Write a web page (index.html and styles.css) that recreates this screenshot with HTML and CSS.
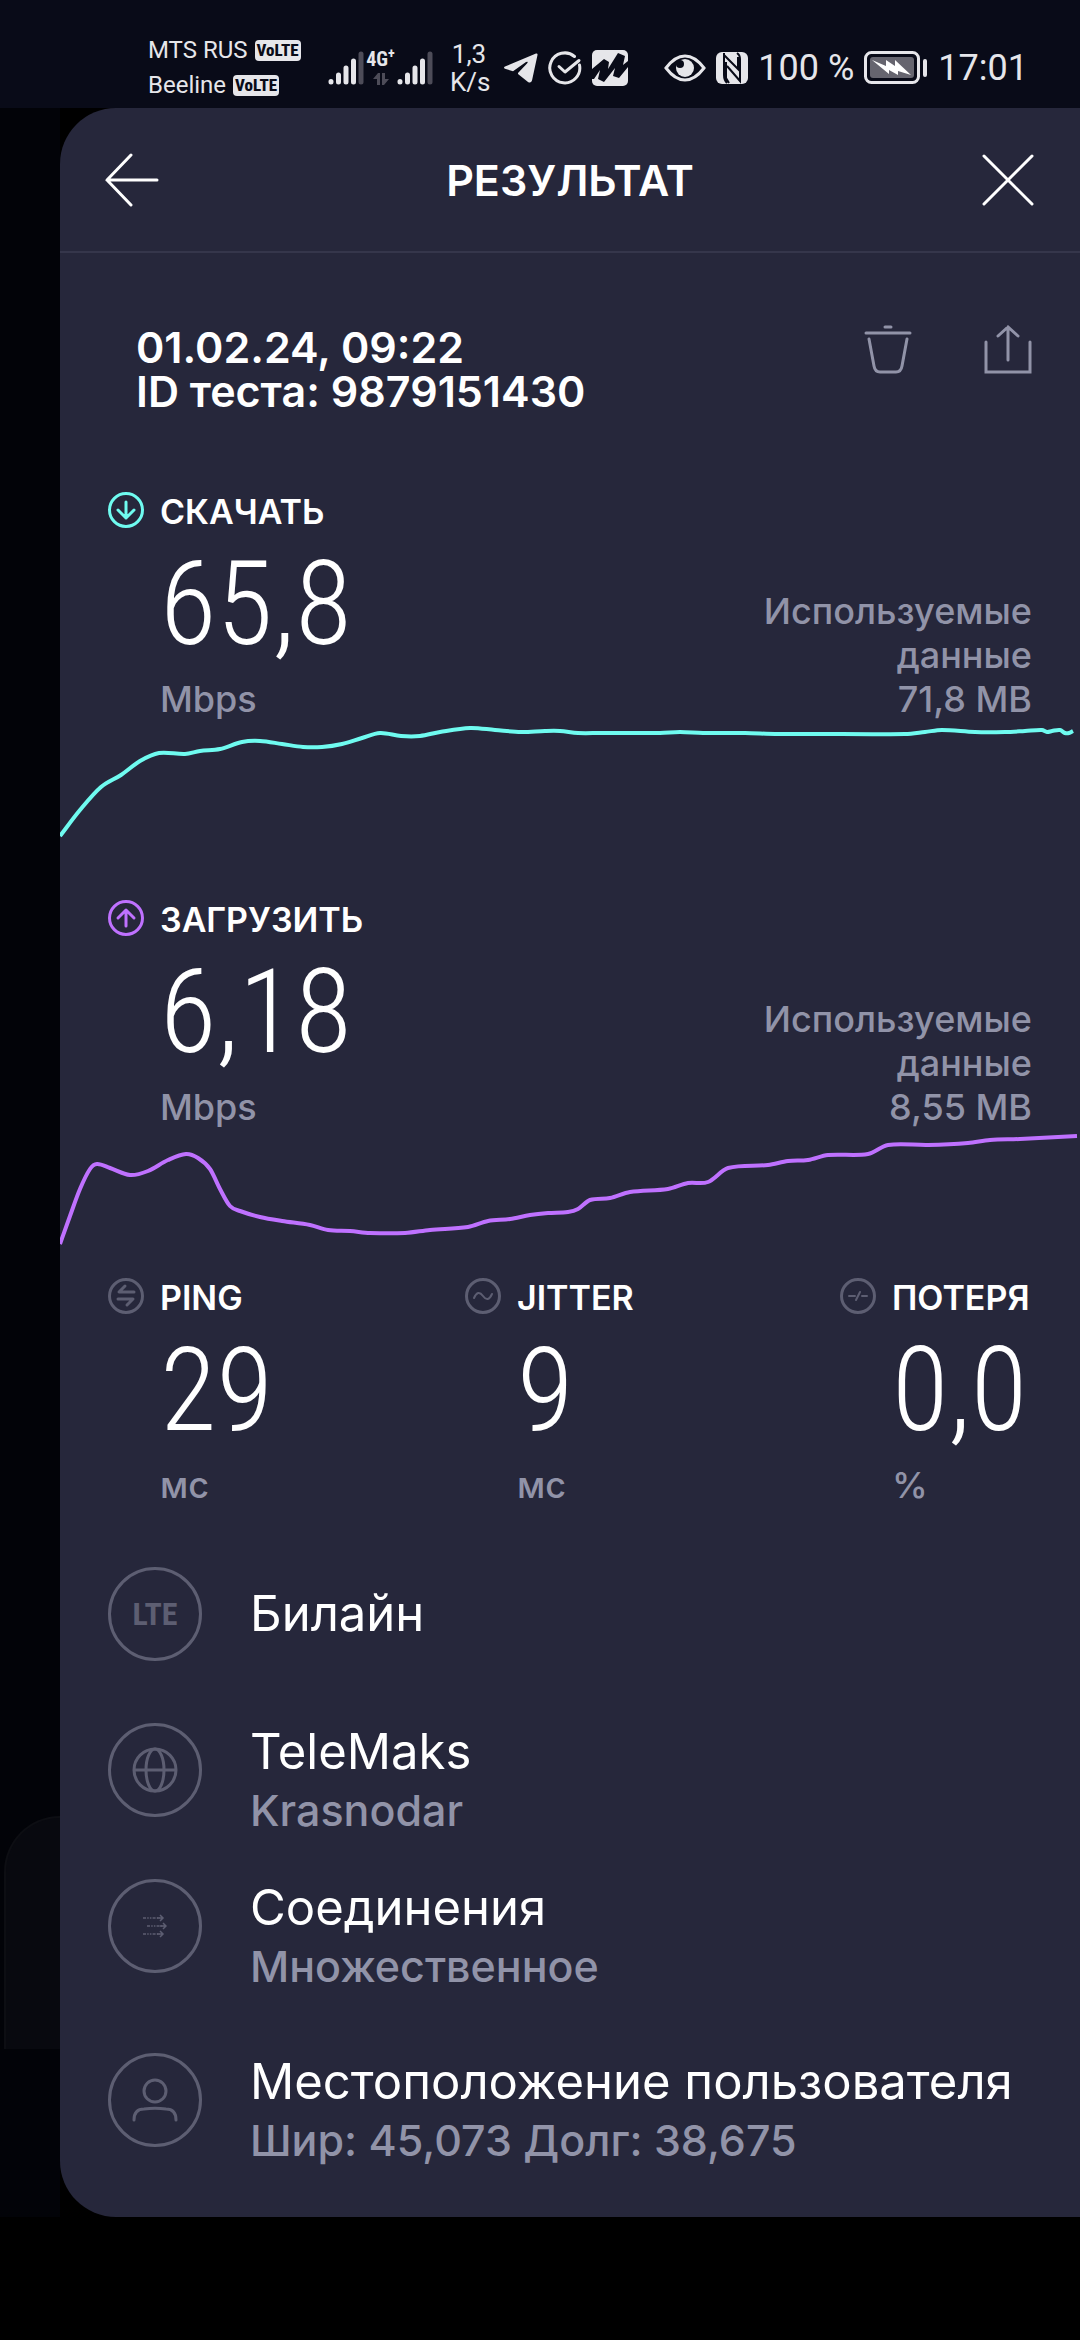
FILE: index.html
```html
<!DOCTYPE html>
<html lang="ru">
<head>
    <meta charset="UTF-8">
    <meta name="viewport" content="width=device-width, initial-scale=1.0">
    <title>Результат</title>
    <link rel="stylesheet" href="styles.css">
</head>
<body>
    <div class="statusbar">
        <div class="carriers">
            <div class="carrier">MTS RUS <span class="volte">VoLTE</span></div>
            <div class="carrier">Beeline <span class="volte">VoLTE</span></div>
        </div>
        <div class="signals">
            <svg width="36" height="34" viewBox="0 0 36 34" fill="none" stroke="#e6e6ea" stroke-width="5" stroke-linecap="round">
                <path d="M3 30.500v.5M10.500 24v7M18 17v14M25.500 10v21"/>
                <path d="M33 3v28" stroke="#4d4c58"/>
            </svg>
            <div class="network">
                <span class="network-type">4G<sup>+</sup></span>
                <svg width="16" height="12" viewBox="0 0 16 12" fill="#4d4c58">
                    <path d="M5 0h2v12H4V6H0zM9 0h3v6h4l-5 6H9z"/>
                </svg>
            </div>
            <svg width="36" height="34" viewBox="0 0 36 34" fill="none" stroke="#e6e6ea" stroke-width="5" stroke-linecap="round">
                <path d="M3 30.500v.5M10.500 24v7M18 17v14M25.500 10v21"/>
                <path d="M33 3v28" stroke="#4d4c58"/>
            </svg>
        </div>
        <div class="netspeed">1,3<br>K/s</div>
        <div class="apps">
            <svg width="34" height="30" viewBox="0 0 34 30" fill="#e6e6ea">
                <path d="M32 .5 1 13.500q-2 1.200 0 2.200l8 2.600L22 9q3-1 1 1.500L14 20v1l10 8q3 1.500 4-1.500L33.500 2q.3-2-1.500-1.500z"/>
            </svg>
            <svg width="34" height="34" viewBox="0 0 34 34" fill="none" stroke="#e6e6ea" stroke-width="3" stroke-linecap="round" stroke-linejoin="round">
                <path d="M26.500 5.500A15 15 0 1 0 31.500 14"/>
                <path d="M11 15.500l6 5.500L31 9.500"/>
            </svg>
            <svg width="36" height="36" viewBox="0 0 36 36">
                <rect width="36" height="36" rx="5" fill="#e6e6ea"/>
                <path d="M0 19 12 9l5 3-1 7L26 3l7 3-2 9 5-4v6l-9 11-6-2 2-8-11 14-6-3 2-9-6 9H0z" fill="#090b18"/>
            </svg>
        </div>
        <div class="system">
            <svg width="42" height="28" viewBox="0 0 42 28" fill="none">
                <path d="M2 14Q11 2 21 2t19 12Q31 26 21 26T2 14z" stroke="#e6e6ea" stroke-width="3"/>
                <circle cx="21" cy="14" r="9" fill="#e6e6ea"/>
                <circle cx="16" cy="10" r="4" fill="#090b18"/>
            </svg>
            <svg width="32" height="32" viewBox="0 0 32 32">
                <rect width="32" height="32" rx="6" fill="#e6e6ea"/>
                <path d="M8 1v22q0 5 3 8M8 3l14 14V5M10 10v16l3 5M11 14l13 15V7q0-4-3-6" fill="none" stroke="#090b18" stroke-width="2"/>
            </svg>
            <span class="percent">100 %</span>
            <svg width="64" height="34" viewBox="0 0 64 34">
                <rect x="1.500" y="1.500" width="53" height="30" rx="6" fill="none" stroke="#e6e6ea" stroke-width="3"/>
                <rect x="6" y="6" width="44" height="21" rx="3" fill="#66656f"/>
                <path d="M8 9l14 6V9l9 6V9l16 15-13-4v4l-9-5v4z" fill="#fff"/>
                <path d="M61 10v14" stroke="#e6e6ea" stroke-width="4" stroke-linecap="round"/>
            </svg>
            <span class="clock">17:01</span>
        </div>
    </div>

    <div class="screen">
        <div class="backdrop">
            <div class="backdrop-card"></div>
        </div>

        <main class="panel">
            <header class="header">
                <button class="icon-button" aria-label="Назад">
                    <svg width="54" height="54" viewBox="0 0 54 54" fill="none" stroke="#fff" stroke-width="3" stroke-linecap="round">
                        <path d="M26 2 2 27l24 25M2 27h50"/>
                    </svg>
                </button>
                <h1 class="title">РЕЗУЛЬТАТ</h1>
                <button class="icon-button" aria-label="Закрыть">
                    <svg width="54" height="54" viewBox="0 0 54 54" fill="none" stroke="#fff" stroke-width="3" stroke-linecap="round">
                        <path d="M3 3l48 48M51 3 3 51"/>
                    </svg>
                </button>
            </header>

            <section class="meta">
                <div class="meta-text">
                    <div>01.02.24, 09:22</div>
                    <div>ID теста: 9879151430</div>
                </div>
                <div class="actions">
                    <button class="icon-button" aria-label="Удалить">
                        <svg width="48" height="50" viewBox="0 0 48 50" fill="none" stroke="#9193a8" stroke-width="3" stroke-linecap="round">
                            <path d="M2 8h44M21 2h6M5 14l5 27q1 6 6 6h16q5 0 6-6l5-27"/>
                        </svg>
                    </button>
                    <button class="icon-button" aria-label="Поделиться">
                        <svg width="48" height="50" viewBox="0 0 48 50" fill="none" stroke="#9193a8" stroke-width="3" stroke-linecap="round">
                            <path d="M2 17v30h44V17M24 35V2M14 11 24 2l10 9"/>
                        </svg>
                    </button>
                </div>
            </section>

            <section class="speed">
                <div class="speed-info">
                    <div class="metric">
                        <svg width="36" height="36" viewBox="0 0 36 36" fill="none" stroke="#6ffbf0" stroke-width="3" stroke-linecap="round" stroke-linejoin="round">
                            <circle cx="18" cy="18" r="16.500"/>
                            <path d="M18 10v16M10 18l8 8 8-8"/>
                        </svg>
                        <div>
                            <h2 class="label">СКАЧАТЬ</h2>
                            <div class="value">65,8</div>
                            <div class="unit">Mbps</div>
                        </div>
                    </div>
                    <div class="used">Используемые данные<br>71,8 MB</div>
                </div>
                <svg class="chart" viewBox="0 0 1020 120"><path id="downloadLine" stroke="#6ffbf0"/></svg>
            </section>

            <section class="speed">
                <div class="speed-info">
                    <div class="metric">
                        <svg width="36" height="36" viewBox="0 0 36 36" fill="none" stroke="#bf71ff" stroke-width="3" stroke-linecap="round" stroke-linejoin="round">
                            <circle cx="18" cy="18" r="16.500"/>
                            <path d="M18 26V10M10 18l8-8 8 8"/>
                        </svg>
                        <div>
                            <h2 class="label">ЗАГРУЗИТЬ</h2>
                            <div class="value">6,18</div>
                            <div class="unit">Mbps</div>
                        </div>
                    </div>
                    <div class="used">Используемые данные<br>8,55 MB</div>
                </div>
                <svg class="chart" viewBox="0 0 1020 120"><path id="uploadLine" stroke="#bf71ff"/></svg>
            </section>

            <section class="latency">
                <div class="metric">
                    <svg width="36" height="36" viewBox="0 0 36 36" fill="none" stroke="#5d5e72" stroke-width="3" stroke-linecap="round" stroke-linejoin="round">
                        <circle cx="18" cy="18" r="16.500"/>
                        <path d="M17 8l-6 6h15M10 21h15l-6 6"/>
                    </svg>
                    <div>
                        <h2 class="label">PING</h2>
                        <div class="value">29</div>
                        <div class="unit">мс</div>
                    </div>
                </div>
                <div class="metric">
                    <svg width="36" height="36" viewBox="0 0 36 36" fill="none" stroke="#5d5e72" stroke-width="3" stroke-linecap="round" stroke-linejoin="round">
                        <circle cx="18" cy="18" r="16.500"/>
                        <path d="M9 20q4-9 9-2t9-2" stroke-width="2"/>
                    </svg>
                    <div>
                        <h2 class="label">JITTER</h2>
                        <div class="value">9</div>
                        <div class="unit">мс</div>
                    </div>
                </div>
                <div class="metric">
                    <svg width="36" height="36" viewBox="0 0 36 36" fill="none" stroke="#5d5e72" stroke-width="3" stroke-linecap="round" stroke-linejoin="round">
                        <circle cx="18" cy="18" r="16.500"/>
                        <path d="M9 18h6M22 18h5M16 22l4-8" stroke-width="2"/>
                    </svg>
                    <div>
                        <h2 class="label">ПОТЕРЯ</h2>
                        <div class="value">0,0</div>
                        <div class="unit">%</div>
                    </div>
                </div>
            </section>

            <section class="details">
                <div class="item">
                    <div class="badge">LTE</div>
                    <div class="item-text">
                        <div class="item-title">Билайн</div>
                    </div>
                </div>
                <div class="item">
                    <div class="badge">
                        <svg width="46" height="46" viewBox="0 0 46 46" fill="none" stroke="#5d5e72" stroke-width="3">
                            <circle cx="23" cy="23" r="21"/>
                            <ellipse cx="23" cy="23" rx="9" ry="21"/>
                            <path d="M2 23h42"/>
                        </svg>
                    </div>
                    <div class="item-text">
                        <div class="item-title">TeleMaks</div>
                        <div class="item-sub">Krasnodar</div>
                    </div>
                </div>
                <div class="item item-tall">
                    <div class="badge">
                        <svg width="24" height="24" viewBox="0 0 24 24" fill="none" stroke="#5d5e72" stroke-width="1.500">
                            <path d="M0 4h17M4 12h17M0 20h17" stroke-dasharray="3 1.200 1.500 1.200 1.500 1.200"/>
                            <path d="M17 1l3 3-3 3M20 9l3 3-3 3M17 17l3 3-3 3M14 4h6M17 12h6M14 20h6"/>
                        </svg>
                    </div>
                    <div class="item-text">
                        <div class="item-title">Соединения</div>
                        <div class="item-sub">Множественное</div>
                    </div>
                </div>
                <div class="item">
                    <div class="badge">
                        <svg width="46" height="46" viewBox="0 0 46 46" fill="none" stroke="#5d5e72" stroke-width="3" stroke-linecap="round">
                            <circle cx="23" cy="14" r="11"/>
                            <path d="M2 43q0-11 10-11 11-1.500 22 0 10 0 10 11"/>
                        </svg>
                    </div>
                    <div class="item-text">
                        <div class="item-title">Местоположение пользователя</div>
                        <div class="item-sub">Шир: 45,073 Долг: 38,675</div>
                    </div>
                </div>
            </section>
        </main>
    </div>

    <script src="script.js"></script>
</body>
</html>
```

FILE: styles.css
```css
* {
    box-sizing: border-box;
}
body {
    margin: 0;
    min-height: 100vh;
    background: #000;
    color: #fff;
    font-family: Inter, "Noto Sans", sans-serif;
}
svg {
    display: block;
    flex-shrink: 0;
}

/* Status bar */
.statusbar {
    display: flex;
    align-items: center;
    height: 108px;
    padding: 28px 52px 0 148px;
    background: #090b18;
    color: #e6e6ea;
    font-family: Roboto, sans-serif;
    white-space: nowrap;
}
.carriers {
    width: 180px;
}
.carrier {
    display: flex;
    align-items: center;
    gap: 7px;
    font-size: 24px;
    line-height: 35px;
}
.volte {
    padding: 0 2px;
    border-radius: 4px;
    background: #e6e6ea;
    color: #090b18;
    font-family: "Roboto Condensed", Roboto, sans-serif;
    font-size: 17px;
    font-weight: 800;
    line-height: 21px;
}
.signals {
    display: flex;
    align-items: flex-end;
    width: 122px;
}
.network {
    display: flex;
    flex-direction: column;
    align-items: center;
    gap: 6px;
    width: 33px;
}
.network-type {
    font-family: "Roboto Condensed", Roboto, sans-serif;
    font-size: 20px;
    font-weight: 700;
    line-height: 16px;
}
.network-type sup {
    font-size: 14px;
    line-height: 0;
}
.netspeed {
    width: 38px;
    font-size: 26px;
    line-height: 28px;
    text-align: center;
}
.apps {
    display: flex;
    align-items: center;
    gap: 10px;
    margin-left: 16px;
}
.system {
    display: flex;
    align-items: center;
    gap: 10px;
    margin-left: auto;
}
.percent,
.clock {
    font-size: 36px;
    line-height: 40px;
}

/* Result panel over the dimmed screen */
.screen {
    display: grid;
    grid-template-columns: 60px 1fr;
}
.backdrop {
    display: flex;
    flex-direction: column;
    justify-content: flex-end;
    padding: 0 0 168px 4px;
    background: #020308;
}
.backdrop-card {
    height: 233px;
    border: 2px solid #0d0e13;
    border-width: 2px 0 0 2px;
    border-radius: 56px 0 0 0;
    background: #08090f;
}
.panel {
    min-width: 0;
    border-radius: 56px 0 0 56px;
    background: #26273b;
}
.header {
    display: flex;
    align-items: center;
    justify-content: space-between;
    height: 145px;
    padding: 0 45px;
    border-bottom: 2px solid #35364b;
}
.title {
    margin: 0;
    font-size: 43px;
    font-weight: 600;
}
.icon-button {
    padding: 0;
    border: none;
    background: none;
    cursor: pointer;
}
.meta {
    display: flex;
    justify-content: space-between;
    padding: 72px 48px 79px 76px;
    font-size: 43px;
    font-weight: 600;
    line-height: 44px;
}
.actions {
    display: flex;
    align-items: flex-start;
    gap: 72px;
}

/* Metrics */
.speed {
    margin-bottom: 59px;
}
.speed-info {
    display: flex;
    align-items: flex-end;
    justify-content: space-between;
    padding: 0 48px;
}
.metric {
    display: flex;
    gap: 16px;
}
.label {
    margin: 0;
    font-size: 34px;
    font-weight: 600;
    line-height: 40px;
}
.value {
    font-family: "Roboto Condensed", Roboto, sans-serif;
    font-size: 116px;
    font-weight: 300;
    line-height: 145px;
}
.unit,
.used {
    color: #9193a8;
    font-size: 36px;
    font-weight: 500;
    line-height: 44px;
}
.used {
    width: 300px;
    text-align: right;
}
.chart {
    width: 100%;
}
.chart path {
    fill: none;
    stroke-width: 4;
}
.latency {
    display: grid;
    grid-template-columns: 357fr 375fr 192fr;
    margin-top: -30px;
    padding: 0 48px;
}

/* Connection details */
.details {
    padding: 60px 48px 8px;
}
.item {
    display: flex;
    align-items: flex-start;
    gap: 48px;
    min-height: 156px;
}
.item-tall {
    min-height: 174px;
}
.badge {
    display: flex;
    align-items: center;
    justify-content: center;
    flex-shrink: 0;
    width: 94px;
    height: 94px;
    border: 3px solid #5d5e72;
    border-radius: 50%;
    color: #5d5e72;
    font-family: "Roboto Condensed", Roboto, sans-serif;
    font-size: 32px;
    font-weight: 700;
}
.item-text {
    display: flex;
    flex-direction: column;
    justify-content: center;
    min-height: 94px;
    line-height: 58px;
    white-space: nowrap;
}
.item-title {
    font-size: 49px;
    font-weight: 400;
}
.item-sub {
    color: #9193a8;
    font-size: 43px;
    font-weight: 500;
}
```

FILE: script.js
```js
const download = [
    [0, 115], [20, 89], [41, 66], [61, 54], [80, 40], [99, 32], [125, 33], [140, 30], [160, 28],
    [182, 21], [200, 20], [222, 23], [243, 26], [262, 26], [282, 23], [302, 17], [320, 12],
    [341, 15], [360, 15], [380, 11], [410, 7], [435, 9], [461, 11], [485, 10], [500, 10],
    [518, 12], [540, 12], [600, 12], [620, 11], [643, 12], [685, 12], [715, 13], [750, 13],
    [845, 13], [865, 11], [882, 9], [915, 11], [945, 11], [965, 10], [982, 9], [987, 11],
    [992, 10], [1000, 9], [1005, 12], [1009, 12], [1013, 10]
];
const upload = [
    [0, 115], [10, 87], [20, 60], [30, 40], [37, 35], [50, 39], [70, 46], [88, 42], [108, 31],
    [126, 25], [138, 29], [150, 40], [160, 60], [170, 77], [180, 82], [200, 88], [222, 92],
    [250, 96], [268, 101], [290, 102], [310, 104], [345, 104], [370, 101], [408, 98], [428, 92],
    [450, 90], [470, 86], [488, 84], [508, 83], [518, 80], [530, 71], [550, 69],
    [570, 63], [608, 60], [628, 54], [648, 53], [668, 39], [708, 36], [728, 32], [748, 31],
    [768, 26], [808, 25], [828, 16], [868, 16], [908, 14], [930, 11], [960, 10], [1017, 7]
];

// Smooth curve through all the points
function linePath(points) {
    let d = `M${points[0][0]} ${points[0][1]}`;
    for (let i = 0; i < points.length - 1; i++) {
        const before = points[i - 1] || points[i];
        const from = points[i];
        const to = points[i + 1];
        const after = points[i + 2] || to;
        const third = (to[0] - from[0]) / 3;
        const slopeFrom = (to[1] - before[1]) / (to[0] - before[0]);
        const slopeTo = (after[1] - from[1]) / (after[0] - from[0]);
        d += ` C${from[0] + third} ${from[1] + third * slopeFrom} ${to[0] - third} ${to[1] - third * slopeTo} ${to[0]} ${to[1]}`;
    }
    return d;
}

document.getElementById("downloadLine").setAttribute("d", linePath(download));
document.getElementById("uploadLine").setAttribute("d", linePath(upload));
```
